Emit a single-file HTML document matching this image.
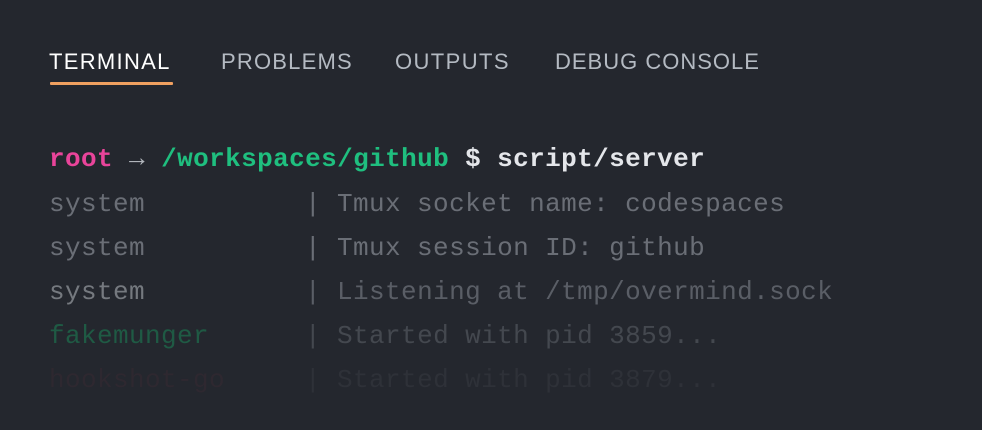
<!DOCTYPE html><html><head><style>
body{margin:0;width:982px;height:430px;background:#24272e;overflow:hidden;position:relative;font-family:"Liberation Sans",sans-serif}
.tab{position:absolute;top:49px;font-size:22px;color:#b4bac2;letter-spacing:1px}
.ul{position:absolute;left:50px;top:82px;width:123px;height:3px;background:#f0a060;border-radius:1px}
.l{position:absolute;left:49px;font-family:"Liberation Mono",monospace;font-size:26px;letter-spacing:0.4px;white-space:pre;color:#6a6e76;line-height:30px}
</style></head><body>
<div class="tab" style="left:49px;color:#fff;letter-spacing:1.3px">TERMINAL</div>
<div class="tab" style="left:221px;letter-spacing:1.2px">PROBLEMS</div>
<div class="tab" style="left:395px;letter-spacing:1.4px">OUTPUTS</div>
<div class="tab" style="left:555px;letter-spacing:1px">DEBUG CONSOLE</div>
<div class="ul"></div>
<div class="l" style="top:144px;font-weight:bold;color:#e4e6ea"><span style="color:#e9449a">root</span> <span style="color:#b0b4ba">→</span> <span style="color:#1fbf7f">/workspaces/github</span> $ script/server</div>
<div class="l" style="top:189px">system          | Tmux socket name: codespaces</div>
<div class="l" style="top:233px">system          | Tmux session ID: github</div>
<div class="l" style="top:277px;color:#75797f">system          <span style="color:#5a5e66">| Listening at /tmp/overmind.sock</span></div>
<div class="l" style="top:321px;color:#1f5a44">fakemunger      <span style="color:#44484f">| Started with pid 3859...</span></div>
<div class="l" style="top:365px;color:#2e2830">hookshot-go     <span style="color:#2e3138">| Started with pid 3879...</span></div>
</body></html>
